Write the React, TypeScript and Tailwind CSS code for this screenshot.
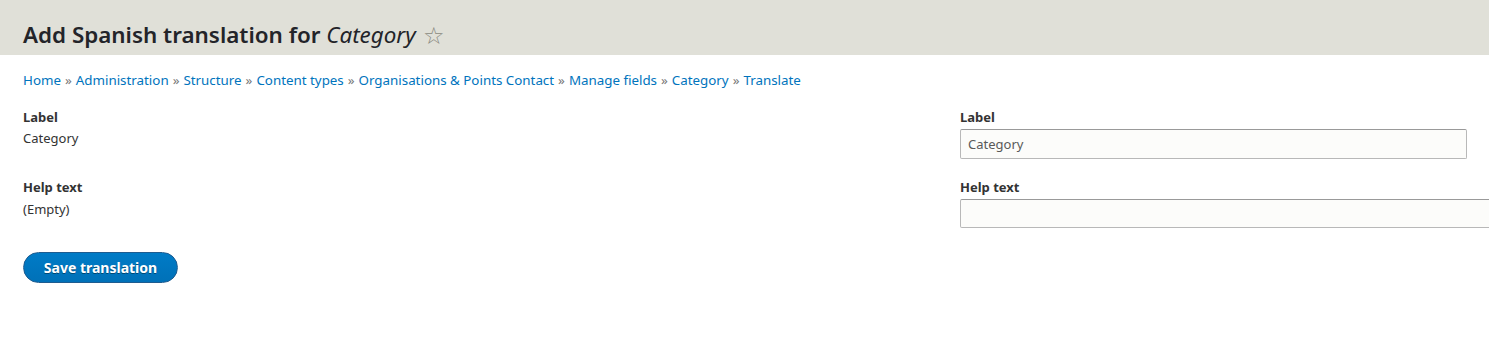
import React from 'react';

const crumbs = [
  'Home',
  'Administration',
  'Structure',
  'Content types',
  'Organisations & Points Contact',
  'Manage fields',
  'Category',
  'Translate',
];

export default function App() {
  return (
    <div className="min-h-[353px] bg-white text-[#333] overflow-hidden" style={{ fontFamily: '"Noto Sans", "Open Sans", sans-serif' }}>
      <div className="h-[55px] bg-[#e0e0d8] px-[23px] flex items-center pt-[15px]">
        <h1 className="text-[22.4px] font-semibold text-[#232429] leading-none flex items-center">
          Add Spanish translation for&nbsp;<em className="font-normal italic">Category</em>
          <span className="ml-[7px] text-[#8a8a80] text-[24px] font-normal">☆</span>
        </h1>
      </div>

      <div className="px-[23px] pt-[16px] text-[13.35px] leading-[18px]">
        {crumbs.map((c, i) => (
          <span key={c}>
            <a href="#" className="text-[#0074bd]">{c}</a>
            {i < crumbs.length - 1 && <span className="text-[#777] mx-[4px]">»</span>}
          </span>
        ))}
      </div>

      <div className="flex pl-[23px] pt-[19px] text-[13px]">
        <div className="w-[937px] shrink-0">
          <div className="font-bold leading-[18px]">Label</div>
          <div className="mt-[3px] leading-[18px]">Category</div>
          <div className="mt-[31px] font-bold leading-[18px]">Help text</div>
          <div className="mt-[4px] leading-[18px]">(Empty)</div>
        </div>
        <div className="flex-1 min-w-0">
          <div className="font-bold leading-[18px]">Label</div>
          <input
            readOnly
            value="Category"
            className="mt-[3px] block w-[507px] h-[30px] px-[7px] border border-[#b8b8b8] border-t-[#999] rounded-[2px] bg-[#fcfcfa] text-[13px] text-[#595959] outline-none"
          />
          <div className="mt-[19px] font-bold leading-[18px]">Help text</div>
          <input
            readOnly
            value=""
            className="mt-[3px] block w-[560px] h-[29px] px-[7px] border border-[#b8b8b8] border-t-[#999] rounded-[2px] bg-[#fcfcfa] text-[13px] outline-none"
          />
        </div>
      </div>

      <div className="px-[23px] pt-[24px]">
        <button className="w-[155px] h-[31px] rounded-full bg-gradient-to-b from-[#007bc6] to-[#0071b8] border border-[#1e5c90] text-white text-[14px] font-bold" style={{ textShadow: '0 1px rgba(0,0,0,0.4)' }}>
          Save translation
        </button>
      </div>
    </div>
  );
}
